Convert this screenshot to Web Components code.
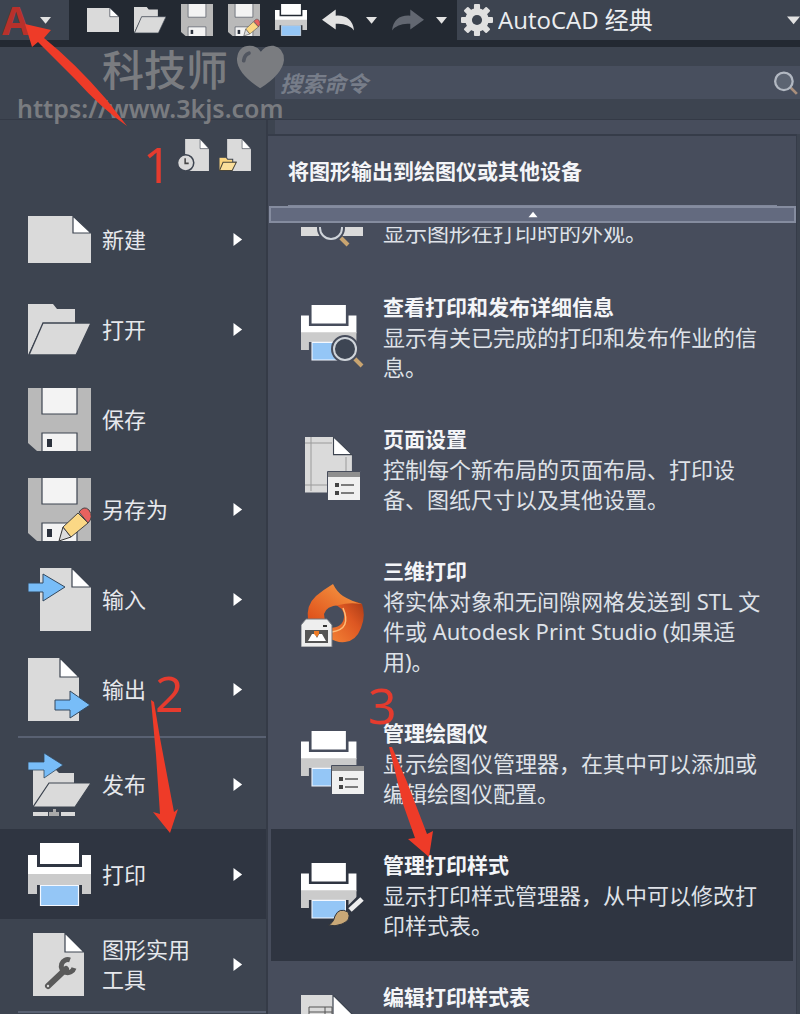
<!DOCTYPE html>
<html lang="zh-CN">
<head>
<meta charset="utf-8">
<meta name="viewport" content="width=device-width, initial-scale=1">
<title>AutoCAD 经典</title>
<style>
  body { margin: 0; background: #3d4450; font-family: "Noto Sans", "Noto Sans CJK SC", sans-serif; }
</style>
</head>
<body>
<cad-app></cad-app>
<script>
const define = (name, html, setup) => {
  const template = document.createElement('template');
  template.innerHTML = html;
  customElements.define(name, class extends HTMLElement {
    constructor() {
      super();
      this.attachShadow({ mode: 'open' }).append(template.content.cloneNode(true));
    }
    connectedCallback() { if (setup) setup(this, this.shadowRoot); }
  });
};

/* Icon artwork, all on a 63 x 63 grid */
const floppy = `<path fill="#b9b9b9" d="M0 0H63V63H9L0 55z"/>
  <path fill="#f3f3f3" stroke="#3d4450" stroke-width="1.2" d="M14-1H49V26H14zM14 45H49V64H14z"/><path fill="#2b313c" d="M19 51H24V59H19z"/>`;
const pencil = `<path fill="#dcdcdc" stroke="#333" stroke-width="1" d="M35 49L31 63L43 59z"/>
  <path fill="#fbd885" stroke="#444" d="M50 35L35 49L43 59L60 45z"/><path fill="#e8625f" stroke="#444" d="M51 34Q56 27 61 32Q66 39 60 45z"/>`;
const page = (x, w, f) => `<path fill="#dadada" d="M${x} 0H${x + w - f}V${f}H${x + w}V63H${x}z"/>
  <path fill="#fff" stroke="#3d4450" stroke-width="1.2" d="M${x + w - f} 0L${x + w} ${f}H${x + w - f}z"/>`;
const printer = `<path fill="#fff" d="M12 0H51V21H12zM0 12H9V24H54V12H63V32H0z"/>
  <path fill="#cbcbcb" d="M0 31H63V51H54V42H9V51H0z"/><path fill="#94c6f6" stroke="#f4f8ff" stroke-width="1.2" d="M12.500 42.500H50.500V62.500H12.500z"/>`;
const smallPrinter = `<g transform="scale(.88)">${printer}</g>`;
const lens = fill => `<path stroke="#c9a470" stroke-width="4" d="M53 53L61 61"/><circle cx="44" cy="44" r="11.500" fill="${fill}" stroke="#474d5c" stroke-width="5"/><circle cx="44" cy="44" r="11" fill="${fill}" stroke="#cfd4da" stroke-width="2"/>`;
const sheet = (x, y) => `<g transform="translate(${x} ${y})"><path fill="#f0f0f0" stroke="#474d5c" d="M-.500-.500H32.500V28.500H-.500z"/><path fill="#8f8f8f" d="M0 0H32V5H0z"/>
  <path fill="#444" d="M7 11H11V15H7zM7 19H11V23H7z"/><path stroke="#555" stroke-width="1.300" d="M13 13H26M13 21H26"/></g>`;
const icons = {
  'new': `<path fill="#dadada" d="M0 8H45V25H63V55H0z"/><path fill="#fff" stroke="#3d4450" stroke-width="1.200" d="M45 8L63 25H45z"/>`,
  'open': `<path fill="#dadada" d="M0 6H25L29 11H47V25H15L0 57z"/><path fill="#dadada" stroke="#3d4450" stroke-width="1.300" d="M15 25H63L48 57H1z"/>`,
  'save': floppy,
  'save-as': floppy + pencil,
  'import': page(12, 51, 19) + `<path fill="#78bdf8" stroke="#34495e" d="M0 15H15V6L37 19L15 33V24H0z"/>`,
  'export': page(0, 51, 19) + `<path fill="#78bdf8" stroke="#34495e" d="M27 42H42V33L62 47L42 60V52H27z"/>`,
  'publish': `<path fill="#dadada" d="M5 17H28L31 20H46V30H21L5 54z"/><path fill="#dadada" stroke="#3d4450" stroke-width="1.200" d="M21 30H63L47 54H5z"/>
    <path fill="#78bdf8" stroke="#34495e" stroke-width=".800" d="M0 9H16V0L35 12L16 25V17H0z"/><path fill="#dadada" d="M5 59H20V63H5zM33 59H47V63H33z"/><path fill="#aaa" d="M25 56H28V59H31V63H21V59H25z"/>`,
  'print': printer,
  'tools': page(5, 51, 19) + `<path stroke="#5a5a5a" stroke-width="6" stroke-linecap="round" d="M20 53L38 36"/><circle cx="20" cy="53" r="1.200" fill="#ddd"/>
    <path fill="none" stroke="#5a5a5a" stroke-width="5" d="M42 27A6.500 6.500 0 1 0 46 35"/>`,
  'preview': `<path fill="#dadada" d="M0 20H62V52H0z"/><g transform="translate(-14 0)">${lens('#474d5c')}</g>`,
  'print-details': smallPrinter + lens('#3d4553'),
  'page-setup': `<g transform="translate(4 0) scale(.92 .88)">${page(0, 51, 20)}</g><path fill="none" stroke="#9a9a9a" d="M10 0V54M4 6H31M4 48H28M45 20V36"/>` + sheet(27, 35),
  'plotters': smallPrinter + sheet(31, 35),
  'plot-styles': smallPrinter + `<path stroke="#2f3541" stroke-width="9" d="M49 47L61 35"/><path stroke="#eee" stroke-width="5" d="M49 47L61 36"/><path fill="#c9a877" stroke="#30343c" d="M27 62Q32 61 34 53Q38 44 47 49Q51 57 41 61Q34 64 27 62z"/>`,
  'style-table': page(0, 52, 20) + `<path fill="none" stroke="#555" d="M8 12H31V35H8zM8 17H31M24 12V35"/>`,
  'print-studio': `<defs><linearGradient id="a" x1="1" y1="0" x2="0" y2="1"><stop offset="0" stop-color="#f9a148"/><stop offset="1" stop-color="#dd4c18"/></linearGradient>
    <linearGradient id="b" x1="0" y1="1" x2="1" y2="0"><stop offset="0" stop-color="#f58436"/><stop offset=".6" stop-color="#dd5722"/><stop offset="1" stop-color="#a93a16"/></linearGradient></defs>
    <path fill="url(#b)" d="M32 20Q50 14 61 20Q65 32 60 44Q55 57 44 58Q36 59 28 54V44Q42 44 43 33Q44 24 32 20z"/>
    <path fill="url(#a)" d="M32 0Q36 8 42 12Q50 17 61 20Q48 18 38 21Q25 22 23 30Q23 34 25 38L7 36Q5 21 15 12Q22 6 32 0z"/>
    <path fill="none" stroke="#ffbd78" stroke-width="1.500" d="M31 48Q51 45 42 24"/>
    <path fill="#eee" stroke="#73777d" d="M5 35H26L31 41V63H0V41z"/><path fill="#555" d="M4 46H27V59H4z"/><path fill="#fff" d="M7 57L11 50H14L16 54L18 50H21L25 57z"/><path fill="#ef7c27" d="M13 47H18V50L16 53L13 50z"/><path fill="#333" d="M22 41H26V43H22z"/>`,
  'recent': `<g transform="translate(16 0) scale(.92 1)">${page(0, 51, 19)}</g><circle cx="17" cy="47" r="16" fill="#dadada" stroke="#3d4450" stroke-width="3"/><path fill="none" stroke="#444" stroke-width="3" d="M16 38V48H23"/>`,
  'open-recent': `<g transform="translate(16 0) scale(.92 1)">${page(0, 51, 19)}</g><path fill="#fbd57f" stroke="#3d4450" stroke-width="2" d="M0 36H14L17 40H27V46H33L24 63H0z"/><path fill="#fbdf9b" stroke="#4a4538" stroke-width="2" d="M8 46H34L26 62H1z"/>`,
  'undo': `<path fill="#e2e2e2" d="M0 31L27 11V23Q59 21 63 52Q51 37 27 39V50z"/>`,
  'redo': `<path fill="#626771" d="M63 31L36 11V23Q4 21 0 52Q12 37 36 39V50z"/>`,
  'gear': `<g fill="#e0e0e0"><circle cx="31.500" cy="31.500" r="23"/>${[0, 45, 90, 135].map(a => `<rect x="25.500" y="0" width="12" height="63" rx="2" transform="rotate(${a} 31.500 31.500)"/>`).join('')}</g><circle cx="31.500" cy="31.500" r="10" fill="#3d4450"/>`,
  'search': `<path stroke="#a98f7c" stroke-width="7" d="M44 44L60 60"/><circle cx="26" cy="27" r="23" fill="#5c6472" stroke="#b2b8c2" stroke-width="6"/>`,
  'heart': `<path fill="#7a7c80" d="M31 58Q-1 37 0 18Q2 1 17 1Q27 1 32 9Q38 0 49 1Q63 4 63 20Q61 39 31 58z"/><path fill="none" stroke="#515660" stroke-width="5" stroke-linecap="round" d="M9 21Q10 13 16 11"/>`,
  'down': `<path fill="#e2e2e2" d="M0 12H63L32 50z"/>`,
  'right': `<path fill="#fff" d="M12 0L54 32L12 63z"/>`,
  'up': `<path fill="#fff" d="M0 50H63L32 12z"/>`
};
define('cad-icon', `<style>:host{display:block;flex:none;width:63px;height:63px}svg{display:block;width:100%;height:100%}</style>`, (el, root) => {
  if (!root.querySelector('svg')) root.innerHTML += `<svg viewBox="0 0 63 63" aria-hidden="true">${icons[el.getAttribute('name')] || ''}</svg>`;
});

define('cad-toolbar', `<style>
  :host{display:flex;height:47px;background:#232932;align-items:flex-start}
  button{border:0;padding:0;background:none;display:flex;align-items:center;justify-content:center;flex:none}
  .app{width:69px;height:40px;padding-left:2px;background:#3d4450;justify-content:flex-start;gap:10px;font:700 40px/40px "Open Sans",sans-serif;color:#b8312b}
  .tools{display:flex;align-items:center;height:40px;padding-left:18px;gap:15px;flex:none}
  .tools cad-icon{width:32px;height:32px}
  .tools .caret cad-icon,.app cad-icon{width:11px;height:11px}
  .history{display:flex;gap:12px}
  .space{flex:1;min-width:0;height:40px;margin-left:10px;background:#3d4450;display:flex;align-items:center;padding-left:4px;gap:5px}
  .space cad-icon{width:32px;height:32px}
  .space .drop{width:13px;height:13px}
  select{appearance:none;border:0;background:none;color:#eceef1;font:24px/36px "Open Sans","Noto Sans CJK SC",sans-serif;flex:1;min-width:0;padding:0}
</style>
<button class="app" aria-label="应用程序菜单"><span>A</span><cad-icon name="down"></cad-icon></button>
<div class="tools">
<button aria-label="新建"><cad-icon name="new"></cad-icon></button>
<button aria-label="打开"><cad-icon name="open"></cad-icon></button>
<button aria-label="保存"><cad-icon name="save"></cad-icon></button>
<button aria-label="另存为"><cad-icon name="save-as"></cad-icon></button>
<button aria-label="打印"><cad-icon name="print"></cad-icon></button>
<div class="history"><button aria-label="放弃"><cad-icon name="undo"></cad-icon></button><button class="caret" aria-label="放弃列表"><cad-icon name="down"></cad-icon></button></div>
<div class="history"><button aria-label="重做"><cad-icon name="redo"></cad-icon></button><button class="caret" aria-label="重做列表"><cad-icon name="down"></cad-icon></button></div>
</div>
<label class="space"><cad-icon name="gear"></cad-icon><select aria-label="工作空间"><option>AutoCAD 经典</option></select><cad-icon class="drop" name="down"></cad-icon></label>`);

define('cad-search', `<style>
  :host{display:flex;height:73px;box-sizing:border-box;padding:19px 0 20px 275px;border-bottom:1px solid #343a46}
  label{flex:1;min-width:0;display:flex;align-items:center;background:#484f5e;padding:0 2px 0 5px}
  input{flex:1;min-width:0;border:0;padding:0;background:none;outline:0;color:#dfe2e8;font:italic 700 22px/32px "Open Sans","Noto Sans CJK SC",sans-serif}
  input::placeholder{color:#777d89;opacity:1}
  cad-icon{width:24px;height:24px}
</style><label><input type="text" placeholder="搜索命令" aria-label="搜索命令"><cad-icon name="search"></cad-icon></label>`);

define('cad-menu-item', `<style>
  :host{display:block}
  button{width:100%;height:90px;border:0;padding:0 22px 0 28px;background:none;display:flex;align-items:center;gap:11px;text-align:left;color:#e6e8ec;font:22px/30px "Noto Sans","Noto Sans CJK SC",sans-serif}
  :host([selected]) button{background:#2f3541}
  span{width:90px}
  .more{width:13px;height:15px;margin-left:auto}
  :host([leaf]) .more{display:none}
</style><button><cad-icon></cad-icon><span><slot></slot></span><cad-icon class="more" name="right"></cad-icon></button>`, (el, root) => {
  const icon = document.createElement('cad-icon');
  icon.setAttribute('name', el.getAttribute('icon'));
  root.querySelector('cad-icon').replaceWith(icon);
});

define('cad-menu', `<style>
  :host{display:flex;flex-direction:column;border-right:2px solid #353b47;box-sizing:border-box;overflow:hidden}
  .recent{display:flex;justify-content:flex-end;gap:10px;height:74px;box-sizing:border-box;padding:19px 15px 0 0;flex:none}
  .recent button{border:0;padding:0;background:none;height:32px}
  .recent cad-icon{width:32px;height:32px}
  cad-menu-item{flex:none}
  hr{margin:2px 0 1px 18px;border:0;height:2px;background:#596172;flex:none}
</style>
<div class="recent"><button aria-label="最近使用的文档"><cad-icon name="recent"></cad-icon></button><button aria-label="打开的文档"><cad-icon name="open-recent"></cad-icon></button></div>
<cad-menu-item icon="new">新建</cad-menu-item>
<cad-menu-item icon="open">打开</cad-menu-item>
<cad-menu-item icon="save" leaf>保存</cad-menu-item>
<cad-menu-item icon="save-as">另存为</cad-menu-item>
<cad-menu-item icon="import">输入</cad-menu-item>
<cad-menu-item icon="export">输出</cad-menu-item>
<hr>
<cad-menu-item icon="publish">发布</cad-menu-item>
<cad-menu-item icon="print" selected>打印</cad-menu-item>
<cad-menu-item icon="tools">图形实用工具</cad-menu-item>
<hr>`);

define('cad-command', `<style>
  :host{display:block;flex:none}
  button{width:100%;min-height:132px;border:0;padding:22px 22px 21px 30px;background:none;display:flex;gap:19px;text-align:left;color:#dfe2e8;font:22px/30px "Noto Sans","Noto Sans CJK SC",sans-serif}
  :host([selected]) button{background:#2f3541}
  .icon{align-self:center;margin-top:-2px}
  .text{flex:1;min-width:0}
  .title{display:block;font-size:21px;line-height:29px;font-weight:700;color:#f4f5f8}
  .text slot:not([name]){display:block}
  :host([cut]){height:44px;overflow:hidden;display:flex;align-items:flex-end}
  :host([cut]) button{min-height:0;padding-top:0;padding-bottom:24px;align-items:flex-end}
  :host([cut]) .icon{align-self:flex-end;margin:0}
  :host([cut]) .title{display:none}
</style><button><cad-icon></cad-icon><span class="text"><span class="title"><slot name="title"></slot></span><slot></slot></span></button>`, (el, root) => {
  const icon = document.createElement('cad-icon');
  icon.className = 'icon';
  icon.setAttribute('name', el.getAttribute('icon'));
  root.querySelector('cad-icon').replaceWith(icon);
});

define('cad-submenu', `<style>
  :host{display:flex;flex-direction:column;min-width:0;min-height:0;padding-right:3px}
  .strip{height:14px;margin:0 -3px 0 7px;background:#474d5c;flex:none}
  section{flex:1;min-height:0;display:flex;flex-direction:column;background:#474d5c;border:solid #363c49;border-width:2px 1px 0 0}
  h2{margin:0 19px 0 20px;height:70px;flex:none;display:flex;align-items:center;color:#f4f5f8;font:700 21px/30px "Noto Sans","Noto Sans CJK SC",sans-serif;border-bottom:1px solid #80879a;box-sizing:border-box}
  .up{height:17px;margin:0 0 4px 1px;padding:0;border:2px solid #858c9f;background:#636a7f;flex:none;display:flex;align-items:center;justify-content:center}
  .up cad-icon{width:10px;height:9px}
  .list{flex:1;min-height:0;overflow:hidden;padding:0 3px;display:flex;flex-direction:column}
</style>
<div class="strip"></div>
<section>
<h2>将图形输出到绘图仪或其他设备</h2>
<button class="up" aria-label="向上滚动"><cad-icon name="up"></cad-icon></button>
<div class="list">
<cad-command icon="preview" cut>显示图形在打印时的外观。</cad-command>
<cad-command icon="print-details"><span slot="title">查看打印和发布详细信息</span>显示有关已完成的打印和发布作业的信息。</cad-command>
<cad-command icon="page-setup"><span slot="title">页面设置</span>控制每个新布局的页面布局、打印设备、图纸尺寸以及其他设置。</cad-command>
<cad-command icon="print-studio"><span slot="title">三维打印</span>将实体对象和无间隙网格发送到 STL 文件或 Autodesk Print Studio (如果适用)。</cad-command>
<cad-command icon="plotters"><span slot="title">管理绘图仪</span>显示绘图仪管理器，在其中可以添加或编辑绘图仪配置。</cad-command>
<cad-command icon="plot-styles" selected><span slot="title">管理打印样式</span>显示打印样式管理器，从中可以修改打印样式表。</cad-command>
<cad-command icon="style-table"><span slot="title">编辑打印样式表</span></cad-command>
</div>
</section>`);

/* Watermark and tutorial marks drawn over the window */
define('cad-marks', `<style>
  :host{position:absolute;inset:0;overflow:hidden;pointer-events:none}
  .mark{position:absolute;left:17px;top:43px;color:#7a7c80}
  .name{display:flex;align-items:center;gap:9px;padding-left:85px;font:500 42px/50px "Noto Sans CJK SC",sans-serif}
  .name cad-icon{width:47px;height:47px}
  .url{font:600 25px/30px "Noto Sans",sans-serif}
  svg{position:absolute;left:0;top:0}
  b{position:absolute;font:400 50px/50px "Noto Sans",sans-serif;color:#e53b2e}
</style>
<div class="mark"><div class="name"><span>科技师</span><cad-icon name="heart"></cad-icon></div><div class="url">https://www.3kjs.com</div></div>
<svg width="500" height="900" aria-hidden="true"><g fill="#ee3b28">
<path d="M25 24L51 30L44 38Q75 63 106 99L127 126Q102 109 75 79L38 42L32 47z"/>
<path d="M151 700L154 702L160 738L174 812L178 809L170 833L153 812L160 814L156 755z"/>
<path d="M389 747L392 747L407 782L427 834L433 831L429 857L408 839L415 838L403 804z"/></g></svg>
<b style="left:143px;top:139px">1</b><b style="left:155px;top:668px">2</b><b style="left:368px;top:680px">3</b>`);

define('cad-app', `<style>
  :host{position:relative;display:flex;flex-direction:column;height:100vh;overflow:hidden;background:#3d4450}
  cad-toolbar,cad-search{flex:none}
  main{flex:1;min-height:0;display:grid;grid-template-columns:268px minmax(0,1fr);grid-template-rows:minmax(0,1fr)}
</style><cad-toolbar></cad-toolbar><cad-search></cad-search><main><cad-menu></cad-menu><cad-submenu></cad-submenu></main><cad-marks></cad-marks>`);
</script>
</body>
</html>
